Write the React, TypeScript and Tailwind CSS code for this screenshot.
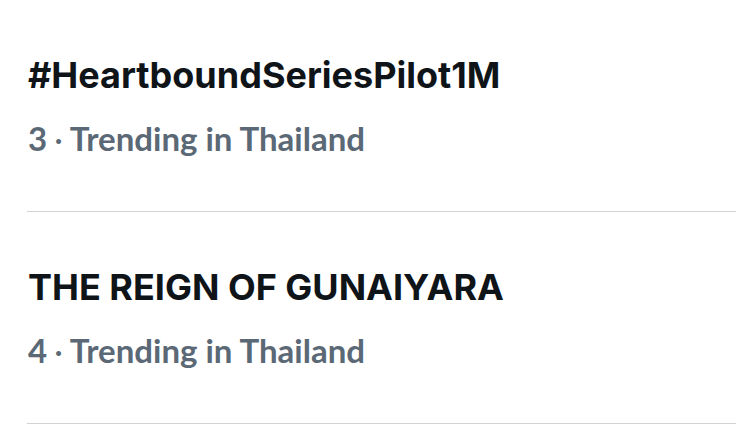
import React from 'react';

interface Trend {
  rank: number;
  name: string;
  location: string;
}

const trends: Trend[] = [
  { rank: 3, name: '#HeartboundSeriesPilot1M', location: 'Thailand' },
  { rank: 4, name: 'THE REIGN OF GUNAIYARA', location: 'Thailand' },
];

const TrendRow: React.FC<{ trend: Trend }> = ({ trend }) => (
  <div className="h-[212px] ml-[27px] pl-[1px] pt-[53px] border-b border-[#cfd3d6]">
    <div className="font-['Inter',sans-serif] font-bold text-[36px] leading-[44px] text-[#0f1419]">
      {trend.name}
    </div>
    <div className="mt-[23px] font-['Lato',sans-serif] font-bold text-[33px] leading-[36px] text-[#5b6876]">
      {trend.rank}
      <span className="font-normal mx-[7px]">·</span>
      Trending in {trend.location}
    </div>
  </div>
);

export default function App() {
  return (
    <div className="w-[736px] h-[431px] bg-white overflow-hidden">
      {trends.map((t) => (
        <TrendRow key={t.rank} trend={t} />
      ))}
    </div>
  );
}
